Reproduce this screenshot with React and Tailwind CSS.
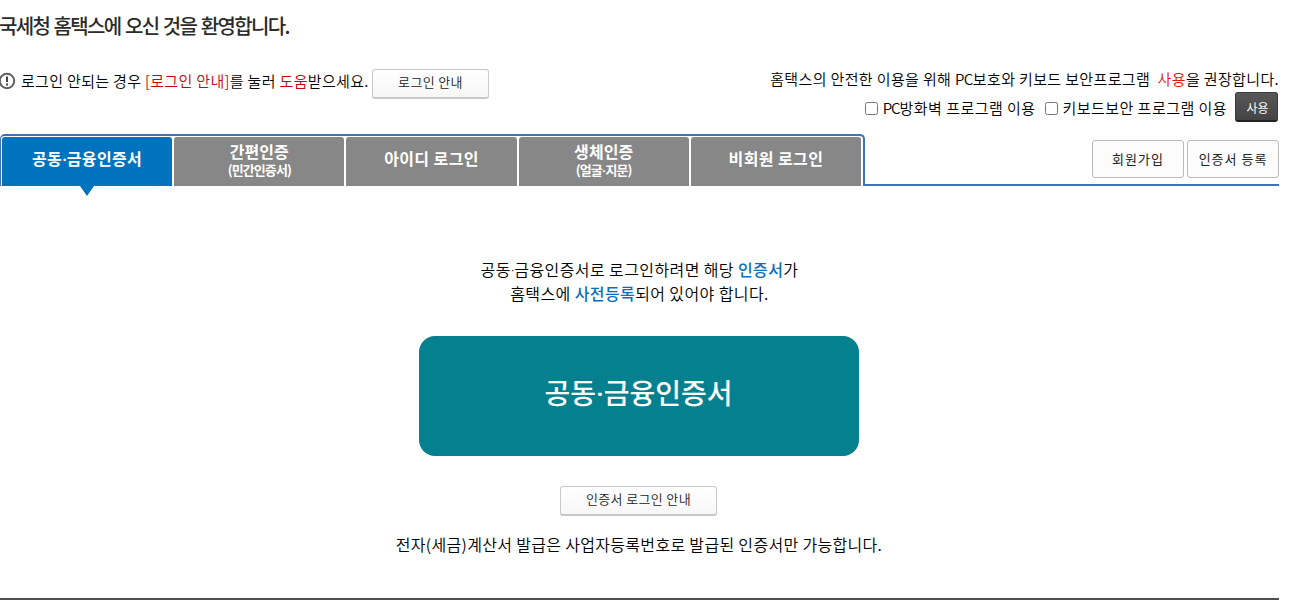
import React, { useState } from 'react';

const tabs = [
  { id: 'cert', label: ['공동', '금융인증서'] },
  { id: 'simple', label: ['간편인증'], sub: ['(민간인증서)'] },
  { id: 'id', label: ['아이디 로그인'] },
  { id: 'bio', label: ['생체인증'], sub: ['(얼굴', '지문)'] },
  { id: 'guest', label: ['비회원 로그인'] },
];

// joins words with a middle dot, Roboto's is narrower than the CJK one
const Dotted = ({ parts }) => (
  <>
    {parts[0]}
    {parts[1] && (
      <>
        <span className="font-['Roboto',sans-serif] leading-none tracking-[-0.4px]">·</span>
        {parts[1]}
      </>
    )}
  </>
);

const NoticeIcon = () => (
  <svg className="-ml-[2px] h-[18px] w-[18px] shrink-0" viewBox="0 0 18 18" fill="none">
    <circle cx="9" cy="9" r="7.2" stroke="#5f5f5f" strokeWidth="2" />
    <path d="M9 4.6v5.4" stroke="#444" strokeWidth="2" />
    <path d="M9 11.4v2" stroke="#444" strokeWidth="2" />
  </svg>
);

const GuideButton = ({ className, children }) => (
  <button
    className={`h-[30px] rounded-[3px] border border-b-2 border-[#c8c8c8] bg-gradient-to-b from-white to-[#f7f7f7] pb-[3px] text-[13px] leading-5 font-[350] tracking-[0.35px] text-[#222] ${className}`}
  >
    {children}
  </button>
);

const Tab = ({ tab, active, onSelect }) => (
  <button
    onClick={() => onSelect(tab.id)}
    className={`relative flex w-0 flex-1 flex-col items-center rounded-t-[3px] font-bold text-white ${
      active ? 'bg-[#0073be]' : 'bg-[#878787]'
    } ${tab.sub ? 'pt-1' : 'pt-[11px]'}`}
  >
    <span className={`text-[16px] leading-5 ${tab.sub ? 'tracking-[0.1px]' : 'tracking-[0.4px]'}`}>
      <Dotted parts={tab.label} />
    </span>
    {tab.sub && (
      <span className="mt-px text-[13px] leading-4 tracking-[-0.9px]">
        <Dotted parts={tab.sub} />
      </span>
    )}
    {active && (
      <svg className="absolute top-full left-1/2 -ml-[7px] h-[10px] w-[14px]" viewBox="0 0 14 10">
        <path d="M0 0h14L7 10z" fill="#0073be" />
      </svg>
    )}
  </button>
);

const App = () => {
  const [activeTab, setActiveTab] = useState('cert');
  const [firewall, setFirewall] = useState(false);
  const [keyboard, setKeyboard] = useState(false);

  return (
    <div className="h-[614px] w-full overflow-hidden bg-white font-['Noto_Sans_CJK_KR',sans-serif] whitespace-nowrap text-black">
      <div className="flex h-[600px] w-[1279px] flex-col border-b-2 border-[#4f4f4f]">
        <h1 className="-ml-px h-[52px] text-[20px] leading-[52px] font-medium tracking-[-1.65px] text-[#2b2b2b] [word-spacing:1.5px]">
          국세청 홈택스에 오신 것을 환영합니다.
        </h1>

        <div className="flex h-[82px] justify-between">
          <div className="flex h-[58px] items-center">
            <NoticeIcon />
            <p className="ml-[5px] w-[351px] text-[15px] font-[350] tracking-[0.32px]">
              로그인 안되는 경우 <span className="text-[#c8000f]">[로그인 안내]</span>를 눌러{' '}
              <span className="text-[#c8000f]">도움</span>받으세요.
            </p>
            <GuideButton className="mt-1.5 w-[117px]">로그인 안내</GuideButton>
          </div>

          <div className="flex flex-col items-end pt-[15px] text-[15px] font-[350] tracking-[0.46px]">
            <p className="h-[25px] leading-6 tracking-[0.36px]">
              홈택스의 안전한 이용을 위해 <span className="tracking-[-0.5px]">PC</span>보호와 키보드 보안프로그램&nbsp;{' '}
              <span className="text-[#d8170f]">사용</span>을 권장합니다.
            </p>
            <div className="flex h-[30px] items-center">
              <label className="flex items-center">
                <input
                  type="checkbox"
                  className="mt-0.5 mr-[5px] h-[13px] w-[13px]"
                  checked={firewall}
                  onChange={(e) => setFirewall(e.target.checked)}
                />
                <span className="mt-0.5">
                  <span className="tracking-[-1px]">PC</span>방화벽 프로그램 이용
                </span>
              </label>
              <label className="ml-[9px] flex items-center">
                <input
                  type="checkbox"
                  className="mt-0.5 mr-[5px] h-[13px] w-[13px]"
                  checked={keyboard}
                  onChange={(e) => setKeyboard(e.target.checked)}
                />
                <span className="mt-0.5">키보드보안 프로그램 이용</span>
              </label>
              <button className="mr-px ml-2 h-[30px] w-[43px] rounded-[3px] border border-b-2 border-[#3a3a3a] border-b-[#222] bg-gradient-to-b from-[#585858] to-[#444] pt-0.5 pl-0.5 text-[12px] font-normal tracking-normal text-white">
                사용
              </button>
            </div>
          </div>
        </div>

        <div className="flex h-[52px]">
          <nav className="flex w-[865px] gap-0.5 rounded-t-[5px] border-t-2 border-r-2 border-l border-[#3a74b5] pt-px pr-0.5 pl-px">
            {tabs.map((tab) => (
              <Tab key={tab.id} tab={tab} active={tab.id === activeTab} onSelect={setActiveTab} />
            ))}
          </nav>
          <div className="flex flex-1 justify-end gap-[3px] border-b-2 border-[#3a74b5] pt-1.5 text-[13px] tracking-[1px] text-[#222]">
            <button className="h-[38px] w-[92px] rounded-[3px] border border-[#bbb] bg-[#fcfcfc]">회원가입</button>
            <button className="h-[38px] w-[92px] rounded-[3px] border border-[#bbb] bg-[#fcfcfc]">인증서 등록</button>
          </div>
        </div>

        <section className="flex flex-col items-center pt-[71px] pr-0.5">
          <p className="h-12 pl-0.5 text-center text-[16px] leading-6 font-[350] tracking-[0.4px]">
            <Dotted parts={['공동', '금융인증서로 로그인하려면 해당 ']} />
            <strong className="font-medium text-[#0a6ebd]">인증서</strong>가
            <br />
            홈택스에 <strong className="font-medium text-[#0a6ebd]">사전등록</strong>되어 있어야 합니다.
          </p>
          <button className="mt-[31px] h-[120px] w-[440px] rounded-[16px] bg-[#05808f] pb-2 text-[28px] font-medium text-white">
            <Dotted parts={['공동', '금융인증서']} />
          </button>
          <GuideButton className="mt-[30px] w-[157px]">인증서 로그인 안내</GuideButton>
          <p className="mt-[16px] pl-px text-[16px] leading-6 font-[350] tracking-[0.32px]">
            전자(세금)계산서 발급은 사업자등록번호로 발급된 인증서만 가능합니다.
          </p>
        </section>
      </div>
    </div>
  );
};

export default App;
